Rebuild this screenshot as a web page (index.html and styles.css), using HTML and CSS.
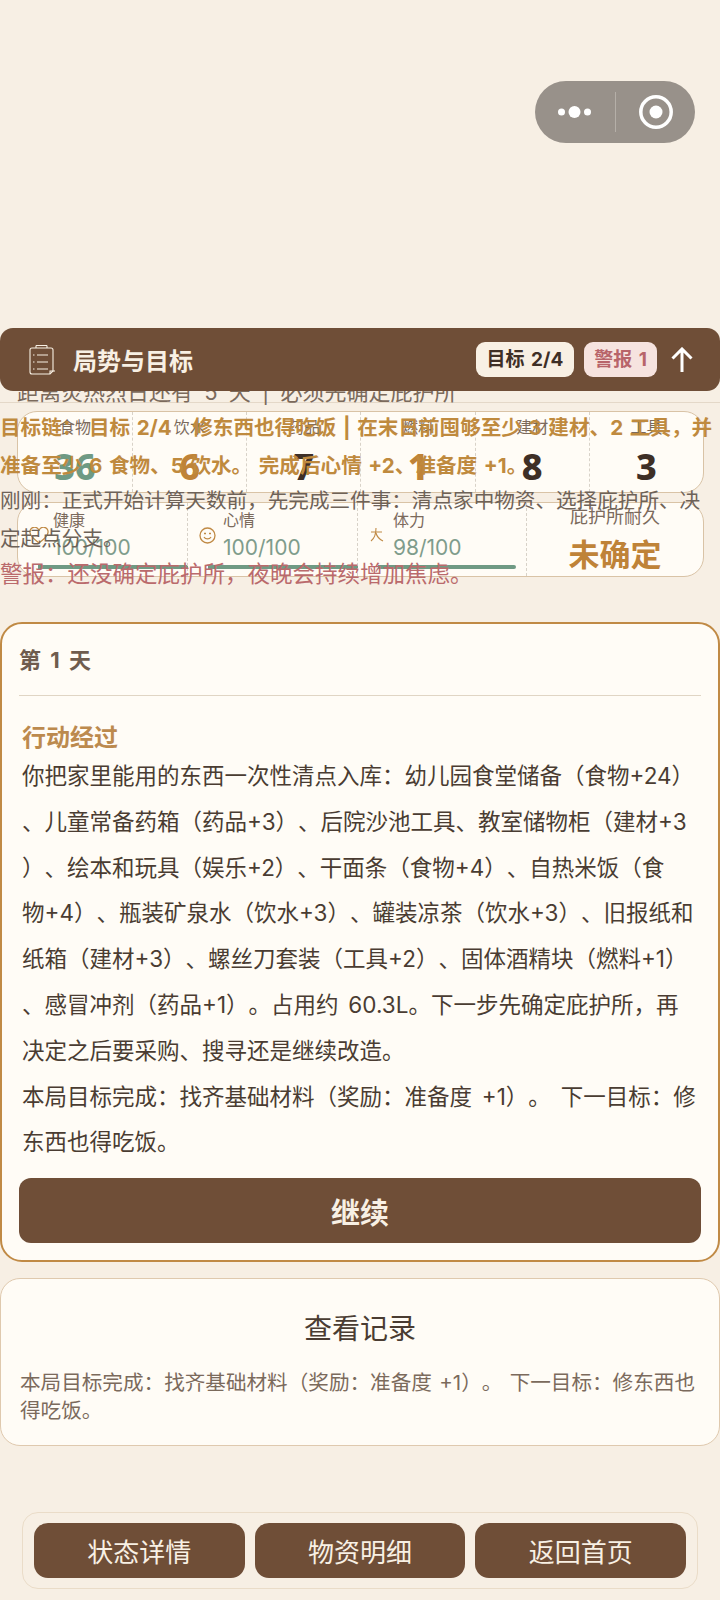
FILE: index.html
```html
<!DOCTYPE html>
<html lang="zh-CN">
<head>
    <meta charset="UTF-8">
    <meta name="viewport" content="width=device-width, initial-scale=1.0">
    <title>局势与目标</title>
    <link rel="stylesheet" href="styles.css">
</head>
<body>
    <div class="capsule">
        <svg class="capsule-more" width="33" height="14" viewBox="0 0 33 14"><circle cx="3.500" cy="7" r="3.500"/><circle cx="16.500" cy="7" r="6"/><circle cx="29.500" cy="7" r="3.500"/></svg>
        <span class="capsule-line"></span>
        <svg class="capsule-target" width="36" height="36" viewBox="0 0 36 36"><circle cx="18" cy="18" r="15.200" fill="none" stroke="#fff" stroke-width="3.500"/><circle cx="18" cy="18" r="6.500" fill="#fff"/></svg>
    </div>

    <div class="goal-bar">
        <svg class="goal-icon" width="26" height="31" viewBox="0 0 26 31" fill="none" stroke="#f8f0e4" stroke-width="1.100">
            <path d="M3 4h19a2 2 0 0 1 2 2v21l-3 3H3a2 2 0 0 1-2-2V6a2 2 0 0 1 2-2z"/>
            <path d="M7 4V1.500M18 4V1.500M7 1.500h11M8 11h11M8 18h11M8 25h11M4 11h1.500M4 18h1.500M4 25h1.500M21 30v-3h5"/>
        </svg>
        <span class="goal-title">局势与目标</span>
        <span class="chip chip-goal">目标 2/4</span>
        <span class="chip chip-alert">警报 1</span>
        <svg class="goal-arrow" width="22" height="25" viewBox="0 0 22 25" fill="none" stroke="#fff" stroke-width="3"><path d="M11 25V2M1.500 11.500L11 2l9.500 9.500"/></svg>
    </div>

    <div class="hud">
        <div class="countdown">距离炎热烈日还有 5 天 | 必须先确定庇护所</div>

        <div class="res-card">
            <div class="res-cell"><span class="res-label">食物</span><span class="res-num green">36</span></div>
            <div class="res-cell"><span class="res-label">饮水</span><span class="res-num orange">6</span></div>
            <div class="res-cell"><span class="res-label">药品</span><span class="res-num">7</span></div>
            <div class="res-cell"><span class="res-label">燃料</span><span class="res-num orange">1</span></div>
            <div class="res-cell"><span class="res-label">建材</span><span class="res-num">8</span></div>
            <div class="res-cell"><span class="res-label">工具</span><span class="res-num">3</span></div>
        </div>

        <div class="stat-card">
            <div class="stat-cell">
                <svg class="stat-icon" width="20" height="17" viewBox="0 0 20 17" fill="none" stroke="#c08a45" stroke-width="1.300"><path d="M10 16C4 11.500 1 8.500 1 5.500a4.500 4.500 0 0 1 9-1.500 4.500 4.500 0 0 1 9 1.500c0 3-3 6-9 10.500z"/></svg>
                <div class="stat-text"><span class="stat-label">健康</span><span class="stat-val">100/100</span></div>
                <div class="stat-bar"></div>
            </div>
            <div class="stat-cell">
                <svg class="stat-icon" width="17" height="17" viewBox="0 0 17 17" fill="none" stroke="#c08a45" stroke-width="1.300"><circle cx="8.500" cy="8.500" r="7.500"/><path d="M5 10c1.500 2.500 5.500 2.500 7 0M5 6.500h2M10 6.500h2"/></svg>
                <div class="stat-text"><span class="stat-label">心情</span><span class="stat-val">100/100</span></div>
                <div class="stat-bar"></div>
            </div>
            <div class="stat-cell">
                <svg class="stat-icon" width="16" height="16" viewBox="0 0 16 16" fill="none" stroke="#c08a45" stroke-width="1.100"><path d="M2 5h11M7 1c0 6-1 10-5 13M7 6c1 4 3 6 7 8"/></svg>
                <div class="stat-text"><span class="stat-label">体力</span><span class="stat-val">98/100</span></div>
                <div class="stat-bar stat-bar-98"></div>
            </div>
            <div class="stat-cell stat-shelter">
                <span class="stat-label">庇护所耐久</span>
                <span class="shelter-val">未确定</span>
            </div>
        </div>

        <div class="goal-detail">
            <p class="chain">目标链： 目标 2/4　修东西也得吃饭 | 在末日前囤够至少 3 建材、2 工具，并准备至少 6 食物、5 饮水。 完成后心情 +2、准备度 +1。</p>
            <p class="just-now">刚刚：正式开始计算天数前，先完成三件事：清点家中物资、选择庇护所、决定起点分支。</p>
            <p class="warn">警报：还没确定庇护所，夜晚会持续增加焦虑。</p>
        </div>
    </div>

    <div class="day-card">
        <div class="day-title">第 1 天</div>
        <div class="day-head">行动经过</div>
        <p class="day-text">你把家里能用的东西一次性清点入库：幼儿园食堂储备（食物+24）、儿童常备药箱（药品+3）、后院沙池工具、教室储物柜（建材+3）、绘本和玩具（娱乐+2）、干面条（食物+4）、自热米饭（食<span class="nb">物+4</span>）、瓶装矿泉水（饮水+3）、罐装凉茶（饮水+3）、旧报纸和纸箱（建材+3）、螺丝刀套装（工具+2）、固体酒精块（燃料+1）、感冒冲剂（药品+1）。占用约 60.3L。下一步先确定庇护所，再决定之后要采购、搜寻还是继续改造。</p>
        <p class="day-text">本局目标完成：找齐基础材料（奖励：准备度 +1）。 下一目标：修东西也得吃饭。</p>
        <button class="continue">继续</button>
    </div>

    <div class="log-card">
        <div class="log-title">查看记录</div>
        <p class="log-text">本局目标完成：找齐基础材料（奖励：准备度 +1）。 下一目标：修东西也得吃饭。</p>
    </div>

    <div class="bottom-nav">
        <button class="nav-btn">状态详情</button>
        <button class="nav-btn">物资明细</button>
        <button class="nav-btn">返回首页</button>
    </div>
</body>
</html>
```

FILE: styles.css
```css
* {
    box-sizing: border-box;
}
body {
    margin: 0;
    height: 1600px;
    overflow: hidden;
    background-color: #f7efe4;
    font-family: Inter, "Noto Sans CJK SC", "Noto Sans", sans-serif;
    text-spacing-trim: space-all;
    color: #3e2f26;
}
p {
    margin: 0;
}

.capsule {
    position: absolute;
    left: 535px;
    top: 81px;
    width: 160px;
    height: 62px;
    border-radius: 31px;
    background-color: #98918a;
    display: flex;
    align-items: center;
}
.capsule-more {
    fill: #fff;
    margin-left: 23px;
}
.capsule-line {
    width: 1px;
    height: 40px;
    margin-left: 24px;
    background-color: #b5afa8;
}
.capsule-target {
    margin-left: 22px;
}

.goal-bar {
    position: absolute;
    z-index: 2;
    left: 0;
    top: 328px;
    width: 720px;
    height: 63px;
    padding: 0 27px 0 29px;
    border-radius: 13px;
    background-color: #6f4e37;
    display: flex;
    align-items: center;
}
.goal-title {
    margin-left: 18px;
    margin-right: auto;
    color: #f8f0e4;
    font-size: 24px;
    font-weight: 700;
}
.chip {
    height: 35px;
    line-height: 35px;
    padding: 0 11px;
    border-radius: 9px;
    font-size: 19px;
    font-weight: 700;
    word-spacing: 2px;
}
.chip-goal {
    background-color: #f8f0e4;
    color: #3e2f26;
}
.chip-alert {
    margin-left: 10px;
    padding: 0 10px;
    background-color: #f6e3df;
    color: #b8646a;
}
.goal-arrow {
    margin-left: 14px;
}

.hud {
    position: relative;
    height: 254px;
    margin-top: 368px;
    padding-top: 14px;
}
.countdown {
    height: 21px;
    line-height: 20px;
    padding-left: 17px;
    font-size: 22px;
    word-spacing: 5px;
    color: #7b6a5c;
    border-bottom: 1px solid #e4d8c8;
}
.res-card {
    display: grid;
    grid-template-columns: repeat(6, 1fr);
    height: 82px;
    margin: 8px 16px 0 17px;
    border: 1px solid #d9c3a6;
    border-radius: 20px;
    background-color: #fffcf6;
}
.res-cell {
    display: flex;
    flex-direction: column;
    align-items: center;
    border-left: 1px dashed #d8d2c8;
}
.res-cell:first-child {
    border-left: 0;
}
.res-label {
    height: 30px;
    line-height: 30px;
    font-size: 16px;
    color: #7b6a5c;
}
.res-num {
    font-family: "Noto Sans", sans-serif;
    font-size: 36px;
    line-height: 50px;
    font-weight: 800;
}
.green {
    color: #6f9a84;
}
.orange {
    color: #bf8338;
}
.stat-card {
    display: grid;
    grid-template-columns: 169px 170px 169px 1fr;
    height: 75px;
    margin: 9px 16px 0 17px;
    border: 1px solid #d9c3a6;
    border-radius: 20px;
    background-color: #fffcf6;
}
.stat-cell {
    position: relative;
    display: flex;
    padding: 5px 0 0 11px;
    border-left: 1px dashed #d8d2c8;
}
.stat-cell:first-child {
    border-left: 0;
}
.stat-icon {
    flex: none;
    margin-top: 19px;
}
.stat-text {
    position: absolute;
    left: 35px;
    top: 5px;
    display: flex;
    flex-direction: column;
}
.stat-label {
    font-size: 16px;
    line-height: 24px;
    color: #7b6a5c;
}
.stat-val {
    font-size: 21px;
    line-height: 32px;
    color: #7f9c8c;
}
.stat-bar {
    position: absolute;
    left: 20px;
    right: -1px;
    bottom: 7px;
    height: 4px;
    background-color: #6f9a84;
}
.stat-bar-98 {
    right: 10px;
    border-radius: 0 2px 2px 0;
}
.stat-shelter {
    flex-direction: column;
    align-items: center;
    padding: 2px 0 0;
}
.stat-shelter .stat-label {
    font-size: 18px;
}
.shelter-val {
    margin-top: 6px;
    font-size: 31px;
    line-height: 40px;
    font-weight: 700;
    color: #bf8338;
}

/* 展开层盖在数值卡片上面 */
.goal-detail {
    position: absolute;
    left: 0;
    top: 41px;
    width: 720px;
    font-size: 20.600px;
    line-height: 38px;
}
.chain {
    word-spacing: 1.700px;
    color: #bf8a3e;
    font-weight: 700;
}
.just-now {
    margin-top: -3px;
    color: #6e6258;
}
.warn {
    margin-top: -3px;
    font-size: 22.500px;
    color: #ba6a6c;
}

.day-card {
    height: 640px;
    padding: 20px 17px 0;
    border: 2px solid #c08a45;
    border-radius: 22px;
    background-color: #fffcf6;
}
.day-title {
    height: 52px;
    font-size: 22px;
    line-height: 33px;
    font-weight: 700;
    word-spacing: 4px;
    color: #6f5c4e;
    border-bottom: 1px solid #e0d5c4;
}
.day-head {
    margin: 26px 0 0 3px;
    font-size: 24px;
    line-height: 31px;
    font-weight: 700;
    color: #bc8a4e;
}
.day-text {
    padding: 0 1px 0 3px;
    font-size: 22.500px;
    line-height: 45.800px;
    line-break: anywhere;
    word-spacing: 3.500px;
    color: #4a3c32;
}
.nb {
    white-space: nowrap;
}
.continue {
    display: block;
    width: 100%;
    height: 65px;
    margin-top: 13px;
    border: 0;
    border-radius: 12px;
    background-color: #6f4e37;
    color: #f8f0e4;
    font-family: inherit;
    font-size: 29px;
    font-weight: 700;
}

.log-card {
    height: 168px;
    margin-top: 16px;
    padding: 26px 19px 0;
    border: 1px solid #dfc9ae;
    border-radius: 20px;
    background-color: #fffcf6;
}
.log-title {
    text-align: center;
    font-size: 28px;
    line-height: 48px;
    color: #4a3c32;
}
.log-text {
    margin-top: 16px;
    font-size: 20.600px;
    line-height: 28px;
    word-spacing: 1.500px;
    color: #7b6a5c;
}

.bottom-nav {
    display: flex;
    gap: 10px;
    height: 77px;
    margin: 66px 22px 0;
    padding: 10px 11px;
    border: 1px solid #eadcc8;
    border-radius: 16px;
}
.nav-btn {
    flex: 1;
    border: 0;
    border-radius: 14px;
    background-color: #6f4e37;
    color: #f8f0e4;
    font-family: inherit;
    font-size: 26px;
}
```
